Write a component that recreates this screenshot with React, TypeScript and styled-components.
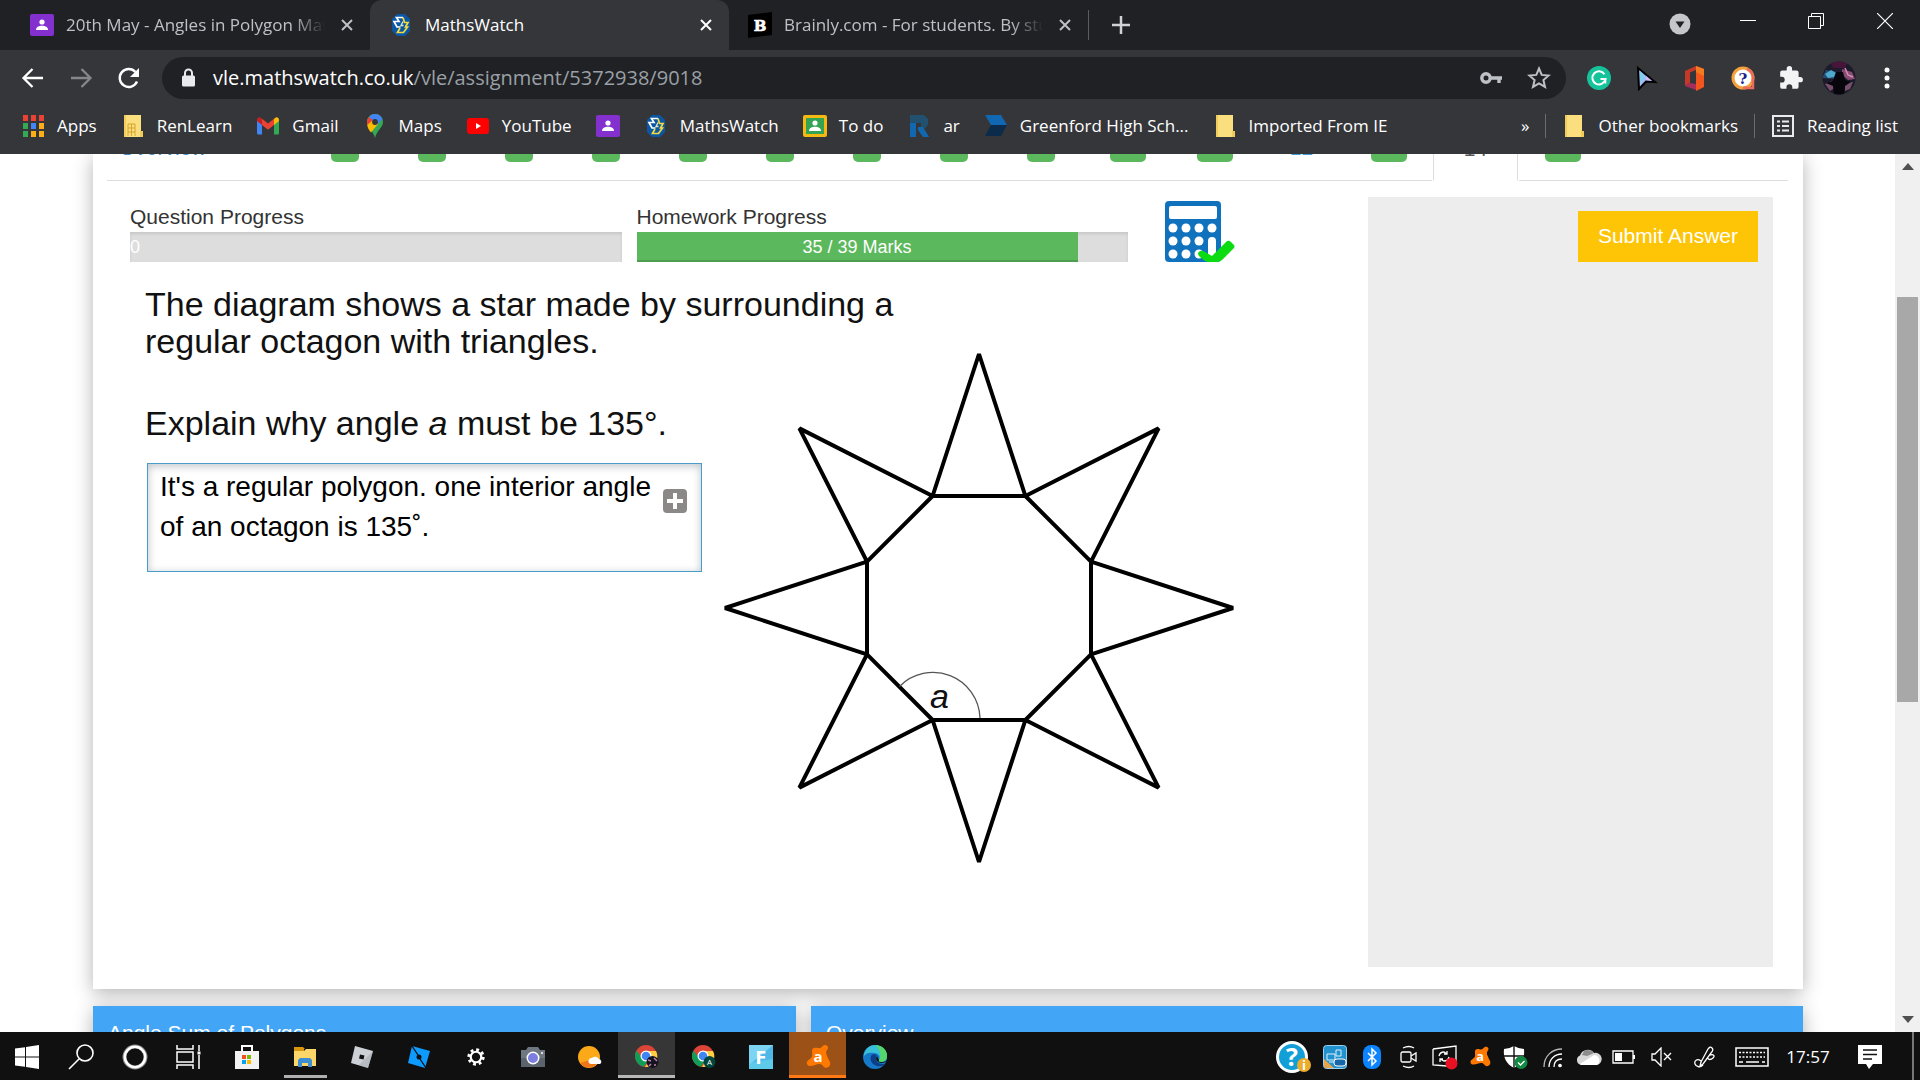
import React from "react";
import styled, { createGlobalStyle, css } from "styled-components";

const uiFont = `"Open Sans", "Noto Sans", sans-serif`;
const pageFont = `"Liberation Sans", Arial, sans-serif`;

const GlobalStyle = createGlobalStyle`
  * { box-sizing: border-box; }
  body { margin: 0; background: #fff; overflow: hidden; }
  button { font: inherit; color: inherit; border: 0; padding: 0; margin: 0; background: none; cursor: pointer; }
  a { color: inherit; text-decoration: none; }
  svg { display: block; flex: none; }
`;

const Screen = styled.div`
  display: flex;
  flex-direction: column;
  height: 100vh;
  font-family: ${pageFont};
`;

/* ---------- browser chrome ---------- */

const Chrome = styled.header`
  flex: none;
  background: #35363a;
  font-family: ${uiFont};
  color: #fff;
`;

const TabStrip = styled.div`
  display: flex;
  align-items: stretch;
  height: 50px;
  padding-left: 11px;
  background: #202124;
`;

const Tab = styled.div<{ $active?: boolean }>`
  display: flex;
  align-items: center;
  gap: 12px;
  flex: 0 1 359px;
  min-width: 0;
  padding: 0 13px 1px 19px;
  border-radius: 12px 12px 0 0;
  background: ${(p) => (p.$active ? "#35363a" : "transparent")};
  color: ${(p) => (p.$active ? "#fff" : "#bdc1c6")};
`;

const TabTitle = styled.a<{ $fade?: boolean }>`
  flex: 1;
  min-width: 0;
  overflow: hidden;
  white-space: nowrap;
  font-size: 17px;
  line-height: 24px;
  ${(p) =>
    p.$fade &&
    css`
      mask-image: linear-gradient(to right, #000 calc(100% - 32px), transparent);
    `}
`;

const IconButton = styled.button<{ $w?: number }>`
  display: flex;
  align-items: center;
  justify-content: center;
  flex: none;
  width: ${(p) => p.$w ?? 24}px;
  height: 100%;
`;

const TabDivider = styled.div`
  align-self: center;
  width: 1px;
  height: 30px;
  background: #5a5c60;
`;

const WindowButtons = styled.div`
  display: flex;
  margin-left: auto;
  padding-bottom: 8px;
`;

const Toolbar = styled.div`
  display: flex;
  align-items: center;
  height: 56px;
  padding: 0 9px;
`;

const AddressBar = styled.div`
  display: flex;
  align-items: center;
  flex: 1;
  height: 42px;
  margin: 0 9px;
  padding: 0 3px 0 14px;
  border-radius: 21px;
  background: #202124;
`;

const Url = styled.div`
  flex: 1;
  margin-left: 13px;
  font-size: 20px;
  line-height: 28px;
  color: #9aa0a6;
  b { font-weight: 400; color: #fff; }
`;

const Bookmarks = styled.nav`
  display: flex;
  align-items: center;
  gap: 24px;
  height: 48px;
  padding: 0 22px 8px 21px;
  font-size: 17px;
  line-height: 24px;
`;

const Bookmark = styled.a`
  display: flex;
  align-items: center;
  gap: 12px;
  white-space: nowrap;
`;

const BookmarksEnd = styled.div`
  display: flex;
  align-items: center;
  gap: 16px;
  margin-left: auto;
`;

const BarDivider = styled.div`
  width: 1px;
  height: 24px;
  background: #6a6c70;
`;

/* ---------- page ---------- */

const Viewport = styled.div`
  display: flex;
  flex: 1;
  min-height: 0;
`;

const Page = styled.main`
  flex: 1;
  min-width: 0;
  overflow: hidden;
  padding: 0 92px 0 93px;
`;

const Card = styled.section`
  background: #fff;
  box-shadow: 0 4px 18px rgba(0, 0, 0, 0.3);
`;

const TabNav = styled.nav`
  display: flex;
  align-items: flex-end;
  height: 27px;
  margin: 0 15px 0 14px;
  overflow: hidden;
`;

const NavCell = styled.a<{ $kind: "first" | "tab" | "active" | "rest" }>`
  display: flex;
  align-items: flex-start;
  flex: none;
  height: 54px;
  padding-top: 6px;
  font-size: 21px;
  line-height: 30px;
  color: #3f9bdc;
  width: 87px;
  justify-content: center;
  border-bottom: 1px solid #ddd;
  ${(p) => p.$kind === "first" && css`
    width: 194px;
    justify-content: flex-start;
    padding-left: 12px;
    color: #428bca;
  `}
  ${(p) => p.$kind === "active" && css`
    width: 85px;
    margin: 0 1px;
    border: 1px solid #ddd;
    border-bottom-color: transparent;
    color: #555;
  `}
  ${(p) => p.$kind === "rest" && css`
    flex: 1;
  `}
`;

const Badge = styled.span<{ $wide?: boolean }>`
  width: ${(p) => (p.$wide ? 36 : 28)}px;
  height: 28px;
  margin-top: 1px;
  border-radius: 5px;
  background: #5cb85c;
  color: #fff;
  font-size: 18px;
  line-height: 24px;
  text-align: center;
`;

const CardBody = styled.div`
  display: flex;
  padding: 16px 30px 22px 37px;
`;

const Main = styled.div`
  flex: 1;
  min-width: 0;
`;

const ProgressRow = styled.div`
  display: grid;
  grid-template-columns: 1fr 1fr 92px;
  column-gap: 15px;
  align-items: end;
  justify-items: stretch;
  padding: 4px 133px 0 0;
`;

const ProgressLabel = styled.div`
  font-size: 21px;
  line-height: 30px;
  color: #333;
`;

const Track = styled.div`
  height: 30px;
  background: #ddd;
  box-shadow: inset 0 2px 3px rgba(0, 0, 0, 0.1);
`;

const Fill = styled.div`
  height: 100%;
  background: #5cb85c;
  box-shadow: inset 0 -2px 0 rgba(0, 0, 0, 0.15);
  color: #fff;
  font-size: 18px;
  line-height: 30px;
  text-align: center;
  white-space: nowrap;
`;

const CalcCell = styled.div`
  display: flex;
  justify-content: flex-end;
`;

const Question = styled.div`
  display: grid;
  grid-template-columns: 557px 1fr;
  grid-template-rows: auto auto 1fr;
  column-gap: 23px;
  padding: 24px 0 0 15px;
  color: #111;
`;

const QuestionText = styled.p<{ $wide?: boolean }>`
  grid-column: ${(p) => (p.$wide ? "1 / -1" : "1")};
  grid-row: ${(p) => (p.$wide ? 1 : 2)};
  margin: ${(p) => (p.$wide ? "0" : "45px 0 0")};
  font-size: 34px;
  line-height: 37px;
`;

const Diagram = styled.div`
  grid-column: 2;
  grid-row: 1 / 4;
  padding-top: 64px;
`;

const AnswerBox = styled.div`
  position: relative;
  grid-column: 1;
  grid-row: 3;
  margin: 21px 0 0 2px;
`;

const Answer = styled.textarea`
  display: block;
  width: 100%;
  height: 109px;
  padding: 3px 12px;
  border: 1px solid #4a9cc9;
  box-shadow: inset 0 2px 8px rgba(60, 80, 100, 0.35);
  outline: 0;
  resize: none;
  overflow: hidden;
  font-family: ${pageFont};
  font-size: 28px;
  line-height: 40px;
  color: #000;
`;

const PlusButton = styled.button`
  position: absolute;
  top: 26px;
  right: 15px;
  display: flex;
  align-items: center;
  justify-content: center;
  width: 24px;
  height: 24px;
  border-radius: 4px;
  background: #8c8888;
`;

const SidePanel = styled.aside`
  flex: none;
  width: 405px;
  min-height: 770px;
  padding: 14px 15px;
  background: #ededed;
  text-align: right;
`;

const Submit = styled.button`
  height: 51px;
  padding: 0 20px 2px;
  background: #fdc506;
  color: #fff;
  font-size: 21px;
  line-height: 30px;
`;

const Panels = styled.div`
  display: grid;
  grid-template-columns: 703fr 992fr;
  gap: 15px;
  margin-top: 17px;
`;

const Panel = styled.section`
  height: 120px;
  padding: 12px 15px;
  background: #42a5f5;
  box-shadow: 0 4px 18px rgba(0, 0, 0, 0.3);
  color: #fff;
`;

const PanelTitle = styled.h3`
  margin: 0;
  font-size: 21px;
  font-weight: 400;
  line-height: 30px;
`;

const Scrollbar = styled.div`
  display: flex;
  flex-direction: column;
  align-items: center;
  width: 25px;
  background: #f0f0f0;
`;

const ScrollArrow = styled.button`
  display: flex;
  align-items: center;
  justify-content: center;
  width: 25px;
  height: 25px;
`;

const ScrollTrack = styled.div`
  flex: 1;
  width: 21px;
  padding-top: 118px;
`;

const ScrollThumb = styled.div`
  height: 405px;
  background: #a8a8a8;
`;

/* ---------- taskbar ---------- */

const Taskbar = styled.footer`
  display: flex;
  flex: none;
  height: 48px;
  background: #101010;
  color: #fff;
  font-family: ${uiFont};
`;

const TaskButton = styled.button<{ $w?: number; $state?: "open" | "focus" | "alert" }>`
  display: flex;
  align-items: center;
  justify-content: center;
  flex: none;
  width: ${(p) => p.$w ?? 57}px;
  padding-top: 3px;
  margin-bottom: 2px;
  background-clip: padding-box;
  box-shadow: none;
  ${(p) => p.$state === "open" && css`
    background: linear-gradient(#b0b0b0, #b0b0b0) center bottom / 43px 3px no-repeat;
  `}
  ${(p) => p.$state === "focus" && css`
    background-color: #363636;
    box-shadow: inset 0 -3px 0 #b8b8b8;
  `}
  ${(p) => p.$state === "alert" && css`
    background-color: #9c5216;
    box-shadow: inset 0 -3px 0 #ff7a17;
  `}
`;

const Tray = styled.div`
  display: flex;
  margin-left: auto;
`;

const Clock = styled.time`
  display: flex;
  align-items: center;
  justify-content: center;
  width: 64px;
  font-size: 17px;
`;

const PeekEdge = styled.div`
  width: 8px;
  border-left: 2px solid #777;
`;

/* ---------- icons ---------- */

const CloseX = () => (
  <svg width="14" height="14" viewBox="0 0 14 14" stroke="currentColor" strokeWidth="2">
    <path d="M2 2l10 10M12 2L2 12" />
  </svg>
);

const Classroom = ({ bg = "#8430ce", edge = "#8430ce" }: { bg?: string; edge?: string }) => (
  <svg width="24" height="24" viewBox="0 0 24 24">
    <rect y="1" width="24" height="22" rx="2" fill={edge} />
    <rect x="3" y="4" width="18" height="16" fill={bg} />
    <circle cx="12" cy="9" r="2.600" fill="#fff" />
    <path d="M6 17c0-3 3-4.300 6-4.300s6 1.300 6 4.300z" fill="#fff" />
  </svg>
);

const MathsWatchIcon = () => (
  <svg width="24" height="24" viewBox="0 0 24 24">
    <path d="M8 1h8l5 5v12l-5 5H8l-5-5V6z" fill="#0b57a4" />
    <path d="M14 4.500H7.500l2.500 4H5l3 5.500h3.500" fill="none" stroke="#fff" strokeWidth="1.700" />
    <path d="M14 4.500l1.500 5h3.500l-2.500 4.500h2l-4 5.500H8.500l2.500-4.500" fill="none" stroke="#f4d93a" strokeWidth="1.700" />
    <path d="M14 8.500l-2 4h2.500" fill="none" stroke="#dfe9c8" strokeWidth="1.300" />
  </svg>
);

const Brainly = () => (
  <svg width="24" height="26" viewBox="0 0 24 26">
    <path d="M0 3L24 0v23L0 26z" fill="#000" />
    <text x="12" y="18.500" textAnchor="middle" fontFamily="DejaVu Serif, serif" fontWeight="700" fontSize="15" fill="#fff" stroke="#fff" strokeWidth=".6">B</text>
  </svg>
);

const Folder = ({ building }: { building?: boolean }) => (
  <svg width="24" height="24" viewBox="0 0 24 24">
    <path d="M3 1h17v16h2v6H3z" fill="#fbdf7e" />
    <path d="M3 1h2v22H3zM19 17h3v6h-3z" fill="#f2cc5a" />
    {building && <path d="M7 10h7v12M7 10v12M10.500 10v12M7 14h7M7 18h7" fill="none" stroke="#d7a52d" />}
  </svg>
);

const Apps = () => {
  const colors = ["#ea4335", "#ea4335", "#ea4335", "#34a853", "#4285f4", "#fbae17", "#34a853", "#fbae17", "#fbae17"];
  return (
    <svg width="24" height="24" viewBox="0 0 24 24">
      {colors.map((c, i) => (
        <rect key={i} x={2 + (i % 3) * 8} y={1 + Math.floor(i / 3) * 8} width="5" height="6" fill={c} />
      ))}
    </svg>
  );
};

const Gmail = () => (
  <svg width="24" height="24" viewBox="0 0 24 24">
    <path d="M1 6v13a1.500 1.500 0 0 0 1.500 1.500H6V9z" fill="#4285f4" />
    <path d="M23 6v13a1.500 1.500 0 0 1-1.500 1.500H18V9z" fill="#34a853" />
    <path d="M18 5v6l5-4V6c0-2.500-2.500-3.500-4-2z" fill="#fbbc04" />
    <path d="M1 6v1l5 4V5L5 4C3.500 2.500 1 3.500 1 6z" fill="#c5221f" />
    <path d="M6 4.800l6 4.700 6-4.700V11l-6 4.700L6 11z" fill="#ea4335" />
  </svg>
);

const MapsPin = () => (
  <svg width="24" height="26" viewBox="0 0 24 26">
    <path d="M12 1c4.500 0 8 3.400 8 8 0 5.500-6 8-8 16-2-8-8-10.500-8-16 0-4.600 3.500-8 8-8z" fill="#34a853" />
    <path d="M12 1c3.600 0 6.300 2 7.400 5L12 14 6 4C7.500 2 9.500 1 12 1z" fill="#4285f4" />
    <path d="M6 4l4 3.500L4.300 13C3.700 8.500 4 6 6 4z" fill="#ea4335" />
    <path d="M4.300 12L10 7l5 4-7 8.500C6 17 4.500 15 4.300 12z" fill="#fbbc04" />
    <circle cx="12" cy="9" r="2.900" fill="#35363a" />
  </svg>
);

const YouTube = () => (
  <svg width="24" height="24" viewBox="0 0 24 24">
    <rect x="1" y="4" width="22" height="16" rx="3" fill="#f00" />
    <path d="M10 9l5 3-5 3z" fill="#fff" />
  </svg>
);

const RLetter = () => (
  <svg width="24" height="26" viewBox="0 0 24 26">
    <path d="M3 2h14l4 4v6l-4 4h-3v-6H3z" fill="#22506f" />
    <path d="M3 10h6v14H3zM11 14h5l6 10h-6l-5-7z" fill="#1268b0" />
  </svg>
);

const Greenford = () => (
  <svg width="24" height="26" viewBox="0 0 24 26">
    <path d="M1 2h16l6 10H7z" fill="#1167b1" />
    <path d="M7 12h16l-6 11H1z" fill="#0c2b4b" />
  </svg>
);

const ReadingList = () => (
  <svg width="24" height="24" viewBox="0 0 24 24" fill="none" stroke="#e8eaed" strokeWidth="2">
    <rect x="2" y="2" width="20" height="20" />
    <path d="M6 7.500h3M11 7.500h7M6 12h3M11 12h7M6 16.500h3M11 16.500h7" />
  </svg>
);

const Arrow = ({ flip, color = "#fff" }: { flip?: boolean; color?: string }) => (
  <svg width="24" height="24" viewBox="0 0 24 24" fill="none" stroke={color} strokeWidth="2.300">
    <path d={flip ? "M2 12h19M12.500 3l9 9-9 9" : "M22 12H3M11.500 3l-9 9 9 9"} />
  </svg>
);

const Reload = () => (
  <svg width="24" height="24" viewBox="0 0 24 24">
    <path d="M20 15.500A9 9 0 1 1 18.500 6" fill="none" stroke="#fff" strokeWidth="2.400" />
    <path d="M22 2v9h-9z" fill="#fff" />
  </svg>
);

const Lock = () => (
  <svg width="24" height="24" viewBox="0 0 24 24">
    <rect x="6" y="9.500" width="13" height="11" rx="1.500" fill="#e8eaed" />
    <path d="M9 10V7a3.500 3.500 0 0 1 7 0v3" fill="none" stroke="#e8eaed" strokeWidth="2" />
  </svg>
);

const Key = () => (
  <svg width="24" height="24" viewBox="0 0 24 24" fill="none" stroke="#bdc1c6">
    <circle cx="7" cy="12" r="4.200" strokeWidth="3.400" />
    <path d="M11 12h12M20 12v5" strokeWidth="3.400" />
  </svg>
);

const Star = () => (
  <svg width="24" height="24" viewBox="0 0 24 24" fill="none" stroke="#bdc1c6" strokeWidth="2">
    <path d="M12 2.500l2.700 6.400 7 .6-5.300 4.600 1.600 6.800-6-3.600-6 3.600 1.600-6.800L2.300 9.500l7-.6z" />
  </svg>
);

const Grammarly = () => (
  <svg width="26" height="26" viewBox="0 0 26 26">
    <circle cx="13" cy="13" r="12" fill="#15c39a" />
    <path d="M18.500 9.200A6.600 6.600 0 1 0 19.500 14h-5" fill="none" stroke="#fff" strokeWidth="2" />
    <path d="M19.300 14v4.500" stroke="#fff" strokeWidth="2" />
  </svg>
);

const Cursor = () => (
  <svg width="26" height="26" viewBox="0 0 26 26">
    <path d="M4 3l17 14-9-.500L5 24z" fill="#a7b8f5" stroke="#000" strokeWidth="2" />
    <path d="M6 6l6 6-6 6z" fill="#7fd0ee" />
    <path d="M12 11l6 5-6-1z" fill="#d7b7f7" />
  </svg>
);

const Office = () => (
  <svg width="26" height="28" viewBox="0 0 26 28">
    <path d="M3 7l11-5v4l-6 2.500V19l-5 3z" fill="#c5392a" />
    <path d="M14 2l8 3v18l-8 4z" fill="#f2561d" />
    <path d="M3 22l5-3 6 1v6z" fill="#a72d5b" />
    <path d="M14 2l8 3v7l-8-4z" fill="#f47b20" />
  </svg>
);

const Quiz = () => (
  <svg width="26" height="26" viewBox="0 0 26 26">
    <circle cx="13" cy="13" r="10" fill="#fff" stroke="#f3a13b" strokeWidth="3" />
    <path d="M17 4a10 10 0 0 1 6 9v10H13a10 10 0 0 0 4-1" fill="none" stroke="#ec6a5e" strokeWidth="2.500" />
    <text x="13" y="19" textAnchor="middle" fontFamily="DejaVu Serif, serif" fontWeight="700" fontSize="15" fill="#1b1d8c">?</text>
  </svg>
);

const Puzzle = () => (
  <svg width="26" height="26" viewBox="0 0 24 24" fill="#f1f3f4">
    <path d="M20.500 11H19V7a2 2 0 0 0-2-2h-4V3.500a2.500 2.500 0 0 0-5 0V5H4a2 2 0 0 0-2 2v3.800h1.500a2.700 2.700 0 0 1 0 5.400H2V20a2 2 0 0 0 2 2h3.800v-1.500a2.700 2.700 0 0 1 5.400 0V22H17a2 2 0 0 0 2-2v-4h1.500a2.500 2.500 0 0 0 0-5z" />
  </svg>
);

const Avatar = () => (
  <svg width="34" height="34" viewBox="0 0 34 34">
    <defs>
      <clipPath id="avatar-clip"><circle cx="17" cy="17" r="16.500" /></clipPath>
    </defs>
    <g clipPath="url(#avatar-clip)">
      <rect width="34" height="34" fill="#1d1a2b" />
      <path d="M0 17L4 9l11 2v7z" fill="#244d70" />
      <path d="M3 13l6-4 5 3-2 4-6 1z" fill="#4fa9cf" />
      <path d="M20 8l10 3 3 7-7 1-6-5z" fill="#8a4c74" />
      <path d="M23 7l3 7 5 2" stroke="#d08fb2" strokeWidth="1.500" fill="none" />
      <path d="M8 0h18l-3 7H11z" fill="#471539" />
      <path d="M3 23l7-3 3 7-5 3zM23 22l8-1-3 7-5 2z" fill="#75506a" />
      <path d="M14 11h7l2 8 6 2-6 4-1 9H12l-1-9-7-3 7-2z" fill="#06060c" />
    </g>
  </svg>
);

const Dots = () => (
  <svg width="24" height="26" viewBox="0 0 24 26" fill="#fff">
    <circle cx="12" cy="5" r="2.500" /><circle cx="12" cy="13" r="2.500" /><circle cx="12" cy="21" r="2.500" />
  </svg>
);

const Calculator = () => (
  <svg width="70" height="61" viewBox="0 0 70 61">
    <rect width="56" height="61" rx="4" fill="#1072bd" />
    <rect x="4" y="5" width="48" height="13" rx="2" fill="#fff" />
    {[8, 21, 34, 47].map((x) =>
      [27, 40, 53].map((y) => (x === 47 && y > 27 ? null : <circle key={`${x}-${y}`} cx={x} cy={y} r="4.500" fill="#fff" />))
    )}
    <rect x="43" y="36" width="8" height="22" rx="4" fill="#fff" />
    <path d="M35 56q-4-4 0-6 2-1 5 1l7 4 15-15q2-1 4 1l3 3q1 2 0 3L57 59q-2 2-5 2h-7q-3 0-5-1z" fill="#0bdc12" />
  </svg>
);

const Chromium = ({ badge }: { badge: "photo" | "letter" }) => (
  <svg width="28" height="28" viewBox="0 0 28 28">
    <circle cx="13" cy="13" r="11" fill="#db4437" />
    <path d="M3.500 7.500A11 11 0 0 0 11 23.800L16 16l-7-1z" fill="#0f9d58" />
    <path d="M13 8h10a11 11 0 0 1-11 16l5-8z" fill="#ffcd40" />
    <circle cx="13" cy="13" r="5.500" fill="#fff" />
    <circle cx="13" cy="13" r="4.300" fill="#4285f4" />
    <circle cx="19.500" cy="19" r="6" fill={badge === "letter" ? "#00463d" : "#17121f"} />
    {badge === "letter" ? (
      <text x="19.500" y="22" textAnchor="middle" fontFamily="Open Sans, sans-serif" fontSize="8" fill="#fff">A</text>
    ) : (
      <path d="M15 17l3 1M21 15l3 3M16 23l2-2M21 22l2 0" stroke="#b884ab" strokeWidth="1.500" />
    )}
  </svg>
);

const Avast = ({ size = 26 }: { size?: number }) => (
  <svg width={size} height={size} viewBox="0 0 26 26">
    <path d="M20 1c3 0 4 3 2 5-2 3 0 5 1 8s3 4 2 7-5 4-7 1-5-2-8-1-7 2-8-1 2-4 4-6 1-4 1-7 2-4 6-3 4-3 7-3z" fill="#ff7800" />
    <text x="13" y="18" textAnchor="middle" fontFamily="Open Sans, sans-serif" fontWeight="700" fontSize="15" fill="#fff">a</text>
  </svg>
);

const StarDiagram = () => {
  const at = (r: number, deg: number) => {
    const t = (deg * Math.PI) / 180;
    return `${(254 + r * Math.cos(t)).toFixed(1)},${(258 + r * Math.sin(t)).toFixed(1)}`;
  };
  const triangles = Array.from({ length: 8 }, (_, i) => {
    const mid = i * 45;
    return `M${at(121.2, mid - 22.5)}L${at(254, mid)}L${at(121.2, mid + 22.5)}Z`;
  });
  return (
    <svg width="508" height="516" viewBox="0 0 508 516" overflow="visible" role="img" aria-label="Octagon surrounded by eight triangles">
      <path d={triangles.join("")} fill="none" stroke="#000" strokeWidth="4" strokeLinejoin="bevel" />
      <path d="M174.500 336.500A47 47 0 0 1 255 368" fill="none" stroke="#555" strokeWidth="1.300" />
      <text x="205" y="358" fontFamily="Liberation Sans, Arial, sans-serif" fontStyle="italic" fontSize="34" fill="#111">a</text>
    </svg>
  );
};

/* ---------- data ---------- */

const bookmarks: { icon: React.ReactNode; label?: string }[] = [
  { icon: <Apps />, label: "Apps" },
  { icon: <Folder building />, label: "RenLearn" },
  { icon: <Gmail />, label: "Gmail" },
  { icon: <MapsPin />, label: "Maps" },
  { icon: <YouTube />, label: "YouTube" },
  { icon: <Classroom /> },
  { icon: <MathsWatchIcon />, label: "MathsWatch" },
  { icon: <Classroom bg="#34a353" edge="#f5b912" />, label: "To do" },
  { icon: <RLetter />, label: "ar" },
  { icon: <Greenford />, label: "Greenford High Sch..." },
  { icon: <Folder />, label: "Imported From IE" },
];

const extensions = [<Grammarly />, <Cursor />, <Office />, <Quiz />, <Puzzle />, <Avatar />];

type TaskItem = { name: string; w?: number; state?: "open" | "focus" | "alert"; icon: React.ReactNode };

const taskItems: TaskItem[] = [
  { name: "Start", w: 54, icon: <svg width="24" height="24" viewBox="0 0 24 24" fill="#fff"><path d="M0 3.500l10-1.300v9.300H0zM11 2l13-2v11.500H11zM0 12.500h10v9.300L0 20.500zM11 12.500h13V24l-13-2z" /></svg> },
  { name: "Search", w: 54, icon: <svg width="26" height="26" viewBox="0 0 26 26" fill="none" stroke="#fff" strokeWidth="1.600"><circle cx="17" cy="9" r="8" /><path d="M11 15L1 25" /></svg> },
  { name: "Cortana", w: 54, icon: <svg width="26" height="26" viewBox="0 0 26 26" fill="none"><circle cx="13" cy="13" r="10.500" stroke="#888" strokeWidth="4" /><circle cx="13" cy="13" r="10.200" stroke="#fff" strokeWidth="2.500" /></svg> },
  { name: "Task view", w: 54, icon: <svg width="26" height="26" viewBox="0 0 26 26" fill="none" stroke="#fff" strokeWidth="1.500"><path d="M1 1v4h16V1M1 25v-4h16v4M1 8h16v10H1zM23 1v6M23 11v14" /><path d="M21.500 9h3" strokeWidth="3" /></svg> },
  { name: "Store", w: 61, icon: <svg width="24" height="26" viewBox="0 0 24 26"><path d="M7 7V2h10v5" fill="none" stroke="#fff" strokeWidth="2" /><path d="M0 7h24v18H0z" fill="#f2f2f2" /><path d="M7 11h4v4H7z" fill="#f25022" /><path d="M12 11h4v4h-4z" fill="#7fba00" /><path d="M7 16h4v4H7z" fill="#00a4ef" /><path d="M12 16h4v4h-4z" fill="#ffb900" /></svg> },
  { name: "File Explorer", w: 56, state: "open", icon: <svg width="24" height="22" viewBox="0 0 24 22"><path d="M1 1h9l2 2h-1v5H1z" fill="#d9960f" /><path d="M1 5h10l2-2h10v17H1z" fill="#fcd668" /><path d="M5 21v-7l2-2h10l2 2v7h-4v-4h-6v4z" fill="#3d8fd1" /></svg> },
  { name: "Roblox", icon: <svg width="24" height="24" viewBox="0 0 24 24"><path d="M5 1l18 5-5 17L1 18z" fill="#cdd1d6" /><path d="M23 6l-5 17-9-3z" fill="#a7abb3" opacity=".6" /><path d="M10 9.500l4.500 1-1 4-4.500-1z" fill="#111" /></svg> },
  { name: "Roblox Studio", icon: <svg width="24" height="24" viewBox="0 0 24 24"><path d="M5 1l18 5-5 17L1 18z" fill="#0e9bff" /><path d="M5 1l6 9M13 14l6 9" stroke="#101010" strokeWidth="1.300" /><circle cx="12" cy="12" r="2.500" fill="#101010" /></svg> },
  { name: "Settings", icon: <svg width="20" height="20" viewBox="0 0 22 22" fill="none" stroke="#fff"><circle cx="11" cy="11" r="5.800" strokeWidth="2.400" /><circle cx="11" cy="11" r="8" strokeWidth="3" strokeDasharray="3.140 3.140" /></svg> },
  { name: "Camera", icon: <svg width="24" height="22" viewBox="0 0 24 22"><path d="M0 4h5l2-3h10l2 3h5v17H0z" fill="#6f7881" /><path d="M0 12h24v9H0z" fill="#5b646d" /><circle cx="12" cy="12" r="6.500" fill="#fff" /><circle cx="12" cy="12" r="5" fill="#7c7fe0" /><circle cx="21" cy="7" r="1" fill="#fff" /></svg> },
  { name: "Weather", icon: <svg width="24" height="24" viewBox="0 0 24 24"><circle cx="11" cy="12" r="11" fill="#fba919" /><path d="M2 18a11 11 0 0 0 17 1l-7-4z" fill="#f0761a" /><path d="M13 19a3 3 0 0 1 1-6 4.500 4.500 0 0 1 7 1 2.700 2.700 0 0 1 1 5z" fill="#fff" /></svg> },
  { name: "Chrome", state: "focus", icon: <Chromium badge="photo" /> },
  { name: "Chrome (A)", icon: <Chromium badge="letter" /> },
  { name: "Fortnite", icon: <svg width="24" height="24" viewBox="0 0 24 24"><rect width="24" height="24" fill="#4fb8e8" /><path d="M0 0h24L0 20z" fill="#7dd4f2" /><path d="M0 18l24-4v10H0z" fill="#66d5e8" opacity=".6" /><text x="12" y="19" textAnchor="middle" fontFamily="DejaVu Sans Condensed, DejaVu Sans, sans-serif" fontWeight="700" fontSize="18" fill="#fff">F</text></svg> },
  { name: "Avast", state: "alert", icon: <Avast /> },
  { name: "Edge", icon: <svg width="26" height="26" viewBox="0 0 26 26"><circle cx="13" cy="13" r="12" fill="#1678c8" /><path d="M2 10C4 4 8 1 13 1c7 0 12 5 12 11 0 4-3 6-6 6-2 0-3-1-2-2 2-4-1-7-5-7-4-1-8 0-10 3z" fill="#38c0d8" /><path d="M14 1c7 1 11 5 11 11 0 4-3 6-6 6-2 0-3-1-2-2 3-5 1-9-3-15z" fill="#55d66b" /><path d="M9 12c-2 6 3 11 10 10 2 0 3-1 4-2-4 0-9 0-9-6 0-2 1-3 1-3-2-1-5-1-6 1z" fill="#0c3f87" /><path d="M15 12c-2 3 0 7 5 7 2 0 4-1 5-3-2 2-4 2-6 2s-3-1-2-2z" fill="#101010" /></svg> },
];

const trayItems: TaskItem[] = [
  { name: "Help", w: 46, icon: <svg width="36" height="34" viewBox="0 0 36 34"><circle cx="17" cy="17" r="14.500" fill="#129fd8" stroke="#fff" strokeWidth="3" /><text x="17" y="26" textAnchor="middle" fontFamily="Open Sans, sans-serif" fontWeight="700" fontSize="25" fill="#fff">?</text><circle cx="29" cy="25" r="7" fill="#ecac2c" /><text x="29" y="30" textAnchor="middle" fontFamily="Open Sans, sans-serif" fontWeight="700" fontSize="13" fill="#fff">i</text></svg> },
  { name: "Intel", w: 38, icon: <svg width="24" height="24" viewBox="0 0 24 24"><rect x=".5" y=".5" width="23" height="23" rx="3" fill="#2292cf" stroke="#9bd3ef" /><path d="M1 14l10 9H3q-2 0-2-2z" fill="#e7a64a" /><path d="M4 9h8v6H4zM13 5h5v6h-5zM6 17h6" fill="none" stroke="#d9f0fb" /><rect x="11" y="14" width="12" height="7" rx="3" fill="#1766a8" stroke="#fff" /></svg> },
  { name: "Bluetooth", w: 36, icon: <svg width="18" height="24" viewBox="0 0 18 24"><rect width="18" height="24" rx="8" fill="#0a84ff" /><path d="M5 8l8 8-4 4V4l4 4-8 8" fill="none" stroke="#fff" strokeWidth="1.500" /></svg> },
  { name: "Meet now", w: 37, icon: <svg width="18" height="24" viewBox="0 0 18 24" fill="none" stroke="#fff" strokeWidth="1.300"><rect x="1" y="7" width="10" height="10" rx="1.500" /><path d="M11 11l5-3v8l-5-3M3 3q6-3 11 0M3 21q6 3 11 0" /></svg> },
  { name: "Update", w: 35, icon: <svg width="26" height="26" viewBox="0 0 26 26" fill="none" stroke="#fff" strokeWidth="1.300"><path d="M1 5l23-3v17M1 5v16l14 1" /><path d="M7 12q1-4 5-4l3 2m0-3v3h-3M17 13q-1 4-5 4l-4-2m0 3v-3h3" /><circle cx="19.500" cy="19.500" r="6" fill="#e81123" stroke="none" /></svg> },
  { name: "Avast tray", w: 36, icon: <Avast size={22} /> },
  { name: "Security", w: 36, icon: <svg width="26" height="26" viewBox="0 0 26 26"><path d="M11 2q5 3 10 3c1 8-2 15-10 19C3 20 0 13 1 5q5 0 10-3z" fill="#fff" /><path d="M11 2v22M1 12h20" stroke="#101010" strokeWidth="1.400" /><circle cx="18" cy="18.500" r="6.500" fill="#138a43" /><path d="M15 18.500l2.500 2.500 4-4" fill="none" stroke="#fff" strokeWidth="1.400" /></svg> },
  { name: "Wi-Fi", w: 37, icon: <svg width="20" height="24" viewBox="0 0 20 24" fill="none" stroke="#fff" strokeWidth="1.300"><path d="M1 22C1 11 9 4 19 4" opacity=".7" /><path d="M6 22c0-8 6-13 13-13M11 22c0-5 3-8 8-8" /><circle cx="17" cy="20.500" r="1.200" fill="#fff" /></svg> },
  { name: "OneDrive", w: 35, icon: <svg width="26" height="18" viewBox="0 0 26 18"><path d="M5 17a5 5 0 0 1-1-9.500A8 8 0 0 1 18 5a6 6 0 0 1 3 12z" fill="#d8d8d8" /><path d="M8 3a8 8 0 0 1 10 2l-7 3-5-1z" fill="#8d8d8d" /><path d="M4 16l14-9a5.500 5.500 0 0 1 3 10H5z" fill="#fff" /></svg> },
  { name: "Battery", w: 36, icon: <svg width="24" height="14" viewBox="0 0 24 14"><path d="M1 1h20v12H1z" fill="none" stroke="#fff" strokeWidth="1.300" /><path d="M21 5h2v4h-2M3 3h7v8H3z" fill="#fff" stroke="none" /></svg> },
  { name: "Volume", w: 39, icon: <svg width="22" height="20" viewBox="0 0 22 20" fill="none" stroke="#fff" strokeWidth="1.300"><path d="M1 7h3l6-6v18l-6-6H1zM13 6l7 7M20 6l-7 7" /></svg> },
  { name: "Pen", w: 47, icon: <svg width="22" height="22" viewBox="0 0 22 22" fill="none" stroke="#fff" strokeWidth="1.300"><path d="M7 16L14 3q2-3 4-1t-1 5L9 18l-3 2zM7 15c-4-3-7 0-6 3s6 4 8 1M16 9c4-1 5 1 3 3s-5 2-5 0" /></svg> },
  { name: "Keyboard", w: 48, icon: <svg width="34" height="20" viewBox="0 0 34 20" fill="none" stroke="#fff" strokeWidth="1.500"><path d="M1 1h32v18H1z" /><path d="M4 5.500h26M4 10h26" strokeDasharray="2 1.500" /><path d="M4 15h4M11 15h13M27 15h3" /></svg> },
];

const badgeCells = Array.from({ length: 15 }, (_, i) => i + 1);

export default function App() {
  return (
    <Screen>
      <GlobalStyle />
      <Chrome>
        <TabStrip>
          <Tab>
            <Classroom />
            <TabTitle href="#" $fade>20th May - Angles in Polygon Maths</TabTitle>
            <IconButton $w={20} aria-label="Close tab"><CloseX /></IconButton>
          </Tab>
          <Tab $active>
            <MathsWatchIcon />
            <TabTitle href="#">MathsWatch</TabTitle>
            <IconButton $w={20} aria-label="Close tab"><CloseX /></IconButton>
          </Tab>
          <Tab>
            <Brainly />
            <TabTitle href="#" $fade>Brainly.com - For students. By students.</TabTitle>
            <IconButton $w={20} aria-label="Close tab"><CloseX /></IconButton>
          </Tab>
          <TabDivider />
          <IconButton $w={64} aria-label="New tab">
            <svg width="18" height="18" viewBox="0 0 18 18" stroke="#d0d2d5" strokeWidth="2.500"><path d="M9 0v18M0 9h18" /></svg>
          </IconButton>
          <WindowButtons>
            <IconButton $w={68} aria-label="Search tabs">
              <svg width="22" height="30" viewBox="0 0 22 22"><circle cx="11" cy="14" r="10.500" fill="#c4c6c9" /><path d="M6.500 11.500h9L11 18z" fill="#202124" /></svg>
            </IconButton>
            <IconButton $w={68} aria-label="Minimise">
              <svg width="16" height="16" viewBox="0 0 16 16"><path d="M0 7.500h16" stroke="#fff" /></svg>
            </IconButton>
            <IconButton $w={68} aria-label="Restore">
              <svg width="16" height="16" viewBox="0 0 16 16" fill="none" stroke="#fff"><path d="M.5 3.500h12v12H.5zM3.500 3.500v-3h12v12h-3" /></svg>
            </IconButton>
            <IconButton $w={70} aria-label="Close">
              <svg width="16" height="16" viewBox="0 0 16 16" stroke="#fff" strokeWidth="1.200"><path d="M0 0l16 16M16 0L0 16" /></svg>
            </IconButton>
          </WindowButtons>
        </TabStrip>
        <Toolbar>
          <IconButton $w={48} aria-label="Back"><Arrow /></IconButton>
          <IconButton $w={48} aria-label="Forward"><Arrow flip color="#85878a" /></IconButton>
          <IconButton $w={48} aria-label="Reload"><Reload /></IconButton>
          <AddressBar>
            <Lock />
            <Url><b>vle.mathswatch.co.uk</b>/vle/assignment/5372938/9018</Url>
            <IconButton $w={48} aria-label="Saved passwords"><Key /></IconButton>
            <IconButton $w={48} aria-label="Bookmark this page"><Star /></IconButton>
          </AddressBar>
          {extensions.map((icon, i) => (
            <IconButton key={i} $w={48} aria-label={`Extension ${i + 1}`}>{icon}</IconButton>
          ))}
          <IconButton $w={48} aria-label="Menu"><Dots /></IconButton>
        </Toolbar>
        <Bookmarks>
          {bookmarks.map((b, i) => (
            <Bookmark key={i} href="#">{b.icon}{b.label && <span>{b.label}</span>}</Bookmark>
          ))}
          <BookmarksEnd>
            <span>»</span>
            <BarDivider />
            <Bookmark href="#"><Folder /><span>Other bookmarks</span></Bookmark>
            <BarDivider />
            <Bookmark href="#"><ReadingList /><span>Reading list</span></Bookmark>
          </BookmarksEnd>
        </Bookmarks>
      </Chrome>

      <Viewport>
        <Page>
          <Card>
            <TabNav>
              <NavCell href="#" $kind="first">Overview</NavCell>
              {badgeCells.map((n) =>
                n === 14 ? (
                  <NavCell key={n} href="#" $kind="active">14</NavCell>
                ) : (
                  <NavCell key={n} href="#" $kind="tab">
                    {n === 12 ? "12" : <Badge $wide={n > 9}>{n}</Badge>}
                  </NavCell>
                )
              )}
              <NavCell as="span" $kind="rest" />
            </TabNav>
            <CardBody>
              <Main>
                <ProgressRow>
                  <div>
                    <ProgressLabel>Question Progress</ProgressLabel>
                    <Track><Fill style={{ width: "0%" }}>0</Fill></Track>
                  </div>
                  <div>
                    <ProgressLabel>Homework Progress</ProgressLabel>
                    <Track><Fill style={{ width: `${(35 / 39) * 100}%` }}>35 / 39 Marks</Fill></Track>
                  </div>
                  <CalcCell><Calculator /></CalcCell>
                </ProgressRow>
                <Question>
                  <QuestionText $wide>
                    The diagram shows a star made by surrounding a<br />regular octagon with triangles.
                  </QuestionText>
                  <QuestionText>Explain why angle <i>a</i> must be 135°.</QuestionText>
                  <AnswerBox>
                    <Answer
                      aria-label="Your answer"
                      spellCheck={false}
                      defaultValue={"It's a regular polygon. one interior angle\nof an octagon is 135˚."}
                    />
                    <PlusButton aria-label="Insert symbol">
                      <svg width="16" height="16" viewBox="0 0 16 16" stroke="#fff" strokeWidth="4"><path d="M8 0v16M0 8h16" /></svg>
                    </PlusButton>
                  </AnswerBox>
                  <Diagram><StarDiagram /></Diagram>
                </Question>
              </Main>
              <SidePanel><Submit>Submit Answer</Submit></SidePanel>
            </CardBody>
          </Card>
          <Panels>
            <Panel><PanelTitle>Angle Sum of Polygons</PanelTitle></Panel>
            <Panel><PanelTitle>Overview</PanelTitle></Panel>
          </Panels>
        </Page>
        <Scrollbar>
          <ScrollArrow aria-label="Scroll up">
            <svg width="12" height="7" viewBox="0 0 12 7"><path d="M0 7l6-7 6 7z" fill="#505050" /></svg>
          </ScrollArrow>
          <ScrollTrack><ScrollThumb /></ScrollTrack>
          <ScrollArrow aria-label="Scroll down">
            <svg width="12" height="7" viewBox="0 0 12 7"><path d="M0 0h12L6 7z" fill="#505050" /></svg>
          </ScrollArrow>
        </Scrollbar>
      </Viewport>

      <Taskbar>
        {taskItems.map((t) => (
          <TaskButton key={t.name} aria-label={t.name} $w={t.w} $state={t.state}>{t.icon}</TaskButton>
        ))}
        <Tray>
          {trayItems.map((t) => (
            <TaskButton key={t.name} aria-label={t.name} $w={t.w}>{t.icon}</TaskButton>
          ))}
          <Clock>17:57</Clock>
          <TaskButton aria-label="Notifications" $w={60}>
            <svg width="24" height="26" viewBox="0 0 24 26"><path d="M0 1h24v19h-9l-4 5-3-5H0z" fill="#fff" /><path d="M5 6h14M5 10.500h14M5 15h9" stroke="#101010" strokeWidth="1.300" /></svg>
          </TaskButton>
          <TaskButton as="span" $w={12} />
          <PeekEdge />
        </Tray>
      </Taskbar>
    </Screen>
  );
}
